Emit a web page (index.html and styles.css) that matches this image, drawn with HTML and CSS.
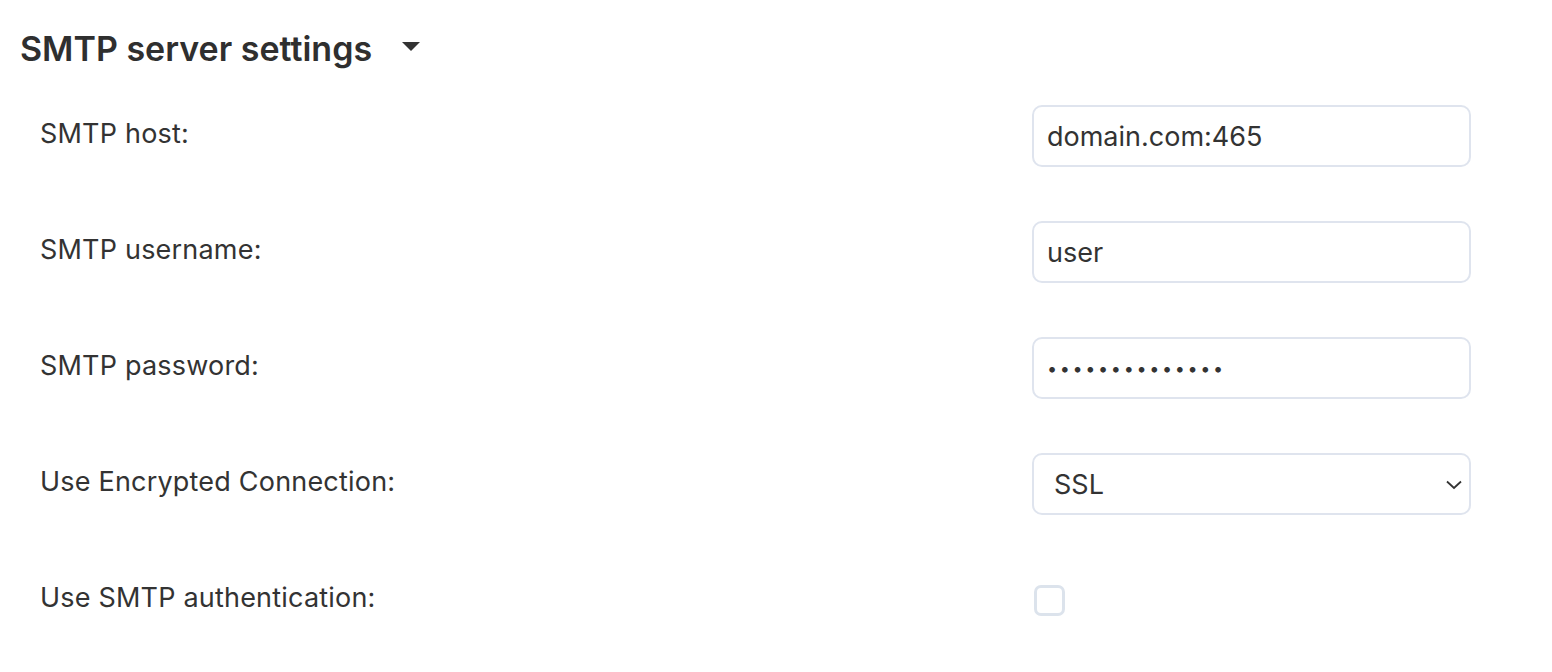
FILE: index.html
```html
<!DOCTYPE html>
<html>
<head>
<meta charset="utf-8">
<link rel="stylesheet" href="styles.css">
</head>
<body>
<div class="page">
  <div class="section-head">
    <h2 class="title">SMTP server settings</h2>
    <svg class="caret" width="18" height="10" viewBox="0 0 18 10"><path d="M0 0 H18 L9 9 Z" fill="#333"/></svg>
  </div>
  <div class="form">
    <div class="row">
      <label class="label">SMTP host:</label>
      <div class="control"><input class="field" type="text" value="domain.com:465"></div>
    </div>
    <div class="row">
      <label class="label">SMTP username:</label>
      <div class="control"><input class="field" type="text" value="user"></div>
    </div>
    <div class="row">
      <label class="label">SMTP password:</label>
      <div class="control"><input class="field pw" type="password" value="12345678901234"></div>
    </div>
    <div class="row">
      <label class="label">Use Encrypted Connection:</label>
      <div class="control select-wrap">
        <select class="field select"><option>SSL</option><option>TLS</option><option>None</option></select>
        <svg class="chev" width="16" height="10" viewBox="0 0 16 10"><path d="M1 1.5 L8 8 L15 1.5" fill="none" stroke="#333" stroke-width="1.8"/></svg>
      </div>
    </div>
    <div class="row">
      <label class="label">Use SMTP authentication:</label>
      <div class="control"><span class="checkbox"></span></div>
    </div>
  </div>
</div>
</body>
</html>
```
FILE: styles.css
```css
html, body {
  margin: 0;
  padding: 0;
  background: #fff;
}
body {
  font-family: Inter, "Noto Sans", sans-serif;
  color: #333;
}
.page {
  padding: 24px 81px 0 20px;
}
.section-head {
  display: flex;
  align-items: center;
  gap: 30px;
  height: 48px;
}
.title {
  margin: 0;
  font-size: 34px;
  font-weight: 600;
  color: #2f2f2f;
}
.caret {
  margin-top: -2px;
}
.form {
  display: flex;
  flex-direction: column;
  gap: 54px;
  margin-top: 33px;
}
.row {
  display: grid;
  grid-template-columns: 1fr 439px;
  align-items: center;
  height: 62px;
}
.label {
  padding-left: 20px;
  font-size: 27px;
  letter-spacing: 0.2px;
  margin-top: -5px;
}
.control {
  height: 62px;
  display: flex;
  align-items: center;
}
.field {
  box-sizing: border-box;
  width: 100%;
  height: 62px;
  border: 2px solid #dfe4ee;
  border-radius: 10px;
  padding: 0 13px;
  font-family: Inter, "Noto Sans", sans-serif;
  font-size: 27px;
  color: #333;
  background: #fff;
  outline: none;
}
.pw {
  letter-spacing: 2.65px;
  font-size: 18px;
}
.select-wrap {
  position: relative;
}
.select {
  appearance: none;
  -webkit-appearance: none;
  padding-left: 20px;
}
.chev {
  position: absolute;
  right: 9px;
  top: 27px;
  pointer-events: none;
}
.checkbox {
  display: block;
  box-sizing: border-box;
  width: 31px;
  height: 31px;
  margin-left: 2px;
  margin-top: 1px;
  border: 3px solid #dce3ec;
  border-radius: 7px;
}
```
